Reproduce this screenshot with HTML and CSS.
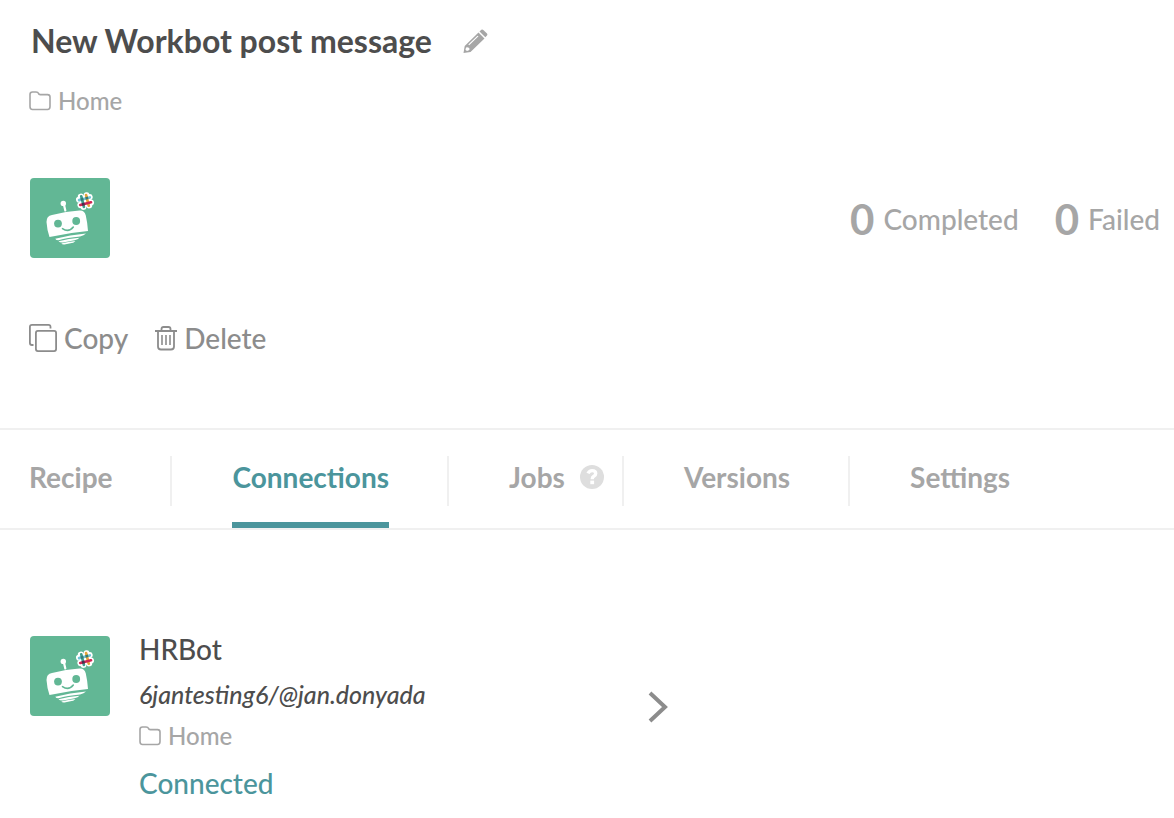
FILE: index.html
```
<!DOCTYPE html>
<html lang="en">
<head>
<meta charset="utf-8">
<title>New Workbot post message</title>
<link rel="stylesheet" href="styles.css">
</head>
<body>
<svg class="sprite" aria-hidden="true">
  <symbol id="workbot" viewBox="0 0 80 80">
    <rect width="80" height="80" rx="4" fill="#62b795"/>
    <g fill="#fff">
      <circle cx="33.300" cy="25.400" r="2.700"/>
      <path d="M33.800 26L35.300 32.500" stroke="#fff" stroke-width="2.200" stroke-linecap="round"/>
      <path d="M16.500 44Q16.300 38 22 36.900Q36 33.400 49.500 32.600Q54.500 32.300 55.800 37.500Q57.500 45 58 53Q38 54.800 19.500 59Q17 52 16.500 44Z"/>
      <path d="M25.200 60.700Q40 57 56 55.600Q54 57.800 50 58.600Q37 60 28.500 62.200Q26 62.200 25.200 60.700Z"/>
      <path d="M28.500 63.200Q39 60.400 49.500 59.700Q48 61.500 44.500 62.200L33 64.500Q29.500 64.600 28.500 63.200Z"/>
      <path d="M31.300 65.600Q38 63.600 45.500 62.900Q43.500 65 40.500 65.300L34.500 66.500Q32.200 66.700 31.300 65.600Z"/>
    </g>
    <g fill="#62b795">
      <circle cx="28" cy="45.600" r="3.900"/>
      <circle cx="46.200" cy="43" r="3.900"/>
      <path d="M32.500 50.600Q38.500 55 43.300 49" fill="none" stroke="#62b795" stroke-width="1.600" stroke-linecap="round"/>
    </g>
    <g transform="translate(55 23) rotate(-14)">
      <g fill="#fff"><circle r="6"/><circle cx="-3" cy="-5.200" r="3"/><circle cx="3" cy="-5.200" r="3"/><circle cx="5.500" cy="-2.700" r="3"/><circle cx="5.500" cy="2.900" r="3"/><circle cx="3" cy="5.300" r="3"/><circle cx="-3" cy="5.300" r="3"/><circle cx="-5.500" cy="2.900" r="3"/><circle cx="-5.500" cy="-2.700" r="3"/></g>
      <g stroke-width="2.700" stroke-linecap="round">
        <path d="M-5.500 -2.300H5.500" stroke="#6fc5d8"/>
        <path d="M2.500 -5.500V5.500" stroke="#e5a539"/>
        <path d="M-2.500 -5.500V5.500" stroke="#3d9e8c"/>
        <path d="M-5.500 2.700H5.500" stroke="#cf2453"/>
      </g>
      <path d="M-3.800 1.400h2.700V4h-2.700z" fill="#472d4d"/>
      <path d="M-3.800 -3.600h2.700v2.600h-2.700zM1.100 -3.600h2.700v2.600h-2.700z" fill="#357b78"/>
    </g>
  </symbol>
  <symbol id="folder" viewBox="0 0 22 20">
    <path d="M1 3.500Q1 1 3.500 1H7Q9 1 9.400 2.300T11.200 3.600H18.500Q21 3.600 21 6V15.500Q21 18.500 18.500 18.500H3.500Q1 18.500 1 15.500Z" fill="none" stroke="currentColor" stroke-width="1.600"/>
  </symbol>
</svg>

<main>
  <header class="recipe">
    <div class="title-row">
      <h1 class="title">New Workbot post message</h1>
      <button class="icon-button" type="button" aria-label="Edit name">
        <svg class="pencil" viewBox="0 0 25 24" fill="#a6a6a6"><path fill-rule="evenodd" d="M15.500 3.500L21.500 9.500L7.500 23L0.500 24L1.700 17ZM4 17.700L2.700 19.500L2.500 21L4 22L5.500 21.500L6.700 20.300L6 18.700L4.500 18.500ZM14.500 6.700L5.300 15.500L6.200 16.300L15.500 7.300Z"/><path d="M16.500 2.500L18.300 .8Q19.300 0 20.300 .9L24 4.600Q24.900 5.600 24 6.500L22.300 8.300Z"/></svg>
      </button>
    </div>
    <a class="folder-link" href="#home"><svg class="folder-icon"><use href="#folder"/></svg>Home</a>
    <div class="summary">
      <svg class="app-icon" role="img" aria-label="Workbot"><use href="#workbot"/></svg>
      <dl class="stats">
        <div class="stat"><dd class="count">0</dd><dt>Completed</dt></div>
        <div class="stat"><dd class="count">0</dd><dt>Failed</dt></div>
      </dl>
    </div>
    <div class="actions">
      <button class="action" type="button"><svg class="copy-icon" viewBox="0 0 28 28" fill="none" stroke="currentColor" stroke-width="1.800"><rect x="6.900" y="6.900" width="20.200" height="20.200" rx="2"/><path d="M21.500 4.500V3Q21.500 .9 19.500 .9H3Q.9 .9 .9 3V19Q.9 21 3 21H4.500"/></svg>Copy</button>
      <button class="action" type="button"><svg class="trash-icon" viewBox="0 0 22 26" fill="none" stroke="currentColor" stroke-width="1.800"><path d="M0 6H22M3 6V21.500Q3 24.500 6 24.500H16Q19 24.500 19 21.500V6M6.500 6V4Q6.500 2 8.500 2H13.500Q15.500 2 15.500 4V6"/><path d="M7 10V20M11 10V20M15 10V20" stroke-width="1.600"/></svg>Delete</button>
    </div>
  </header>

  <nav class="tabs" aria-label="Recipe sections">
    <a class="tab" href="#recipe">Recipe</a>
    <a class="tab active" href="#connections" aria-current="page"><span class="tab-label">Connections</span></a>
    <div class="tab with-help"><a class="tab-link" href="#jobs">Jobs</a><button class="icon-button" type="button" aria-label="Help about jobs"><svg class="help-icon" viewBox="0 0 24 24"><circle cx="12" cy="12" r="12" fill="#dedede"/><path d="M8 8.400Q9.300 5.600 12.100 5.600Q15.700 5.600 15.700 8.500Q15.700 10.300 13.800 11.300Q12.200 12.200 12.200 14.200" fill="none" stroke="#fff" stroke-width="3.400"/><path d="M10.300 15.600h3.800v3.600h-3.800z" fill="#fff"/></svg></button></div>
    <a class="tab" href="#versions">Versions</a>
    <a class="tab" href="#settings">Settings</a>
  </nav>

  <section class="connection" aria-label="Connection">
    <svg class="app-icon" role="img" aria-label="Workbot"><use href="#workbot"/></svg>
    <div class="details">
      <h2 class="name">HRBot</h2>
      <p class="account">6jantesting6/@jan.donyada</p>
      <a class="folder-link" href="#home"><svg class="folder-icon"><use href="#folder"/></svg>Home</a>
      <p class="status">Connected</p>
    </div>
    <button class="icon-button open" type="button" aria-label="Open connection"><svg class="chevron" viewBox="0 0 20 32"><path d="M2 2L17 16L2 30" fill="none" stroke="#8c8c8c" stroke-width="4"/></svg></button>
  </section>
</main>
</body>
</html>
```

FILE: styles.css
```
* {
  box-sizing: border-box;
}

body {
  margin: 0;
  background: #fff;
  color: #4d4d4d;
  font: 500 28px/36px Lato, sans-serif;
}

h1, h2, p, dl, dd {
  margin: 0;
}

a {
  color: inherit;
  text-decoration: none;
}

button {
  padding: 0;
  border: 0;
  background: none;
  color: inherit;
  font: inherit;
  cursor: pointer;
}

svg {
  display: block;
  flex: none;
}

.sprite {
  position: absolute;
  width: 0;
  height: 0;
}

.recipe {
  display: flex;
  flex-direction: column;
  align-items: flex-start;
  padding: 20px 14px 72px 29px;
}

.title-row {
  display: flex;
  align-items: center;
  gap: 31px;
  padding-left: 2px;
}

.title {
  font-size: 32px;
  line-height: 42px;
  font-weight: 700;
}

.pencil {
  width: 25px;
  height: 24px;
}

.folder-link {
  display: flex;
  align-items: center;
  gap: 7px;
  color: #a6a6a6;
  font-size: 24px;
  line-height: 32px;
}

.recipe .folder-link {
  margin-top: 23px;
}

.folder-icon {
  width: 22px;
  height: 20px;
}

.summary {
  display: flex;
  align-items: center;
  justify-content: space-between;
  width: 100%;
  margin-top: 61px;
}

.app-icon {
  width: 80px;
  height: 80px;
}

.summary .app-icon {
  margin-left: 1px;
}

.stats {
  display: flex;
  gap: 36px;
  color: #a6a6a6;
}

.stat {
  display: flex;
  align-items: center;
  gap: 9px;
  padding-top: 2px;
}

.count {
  font-size: 42px;
  font-weight: 700;
}

.actions {
  display: flex;
  gap: 27px;
  margin-top: 62px;
  color: #8c8c8c;
}

.action {
  display: flex;
  align-items: center;
  gap: 7px;
}

.copy-icon {
  width: 28px;
  height: 28px;
}

.trash-icon {
  width: 22px;
  height: 26px;
}

.tabs {
  display: flex;
  align-items: stretch;
  padding-left: 29px;
  border-top: 2px solid #f0f0f0;
  border-bottom: 2px solid #f0f0f0;
  color: #a6a6a6;
  font-weight: 700;
}

.tab {
  display: flex;
  align-items: stretch;
  padding: 29px 60px 33px;
  background: linear-gradient(#f0f0f0, #f0f0f0) no-repeat right 26px / 2px 50px;
}

.tab:first-child {
  padding-left: 0;
}

.tab:last-child {
  background: none;
}

.tab.active {
  padding-bottom: 0;
  color: #4b959c;
}

.tab-label {
  border-bottom: 6px solid #4b959c;
}

.tab.with-help {
  align-items: center;
  gap: 15px;
  padding-right: 20px;
}

.help-icon {
  width: 24px;
  height: 24px;
}

.connection {
  display: flex;
  gap: 29px;
  padding: 101px 30px 16px;
}

.connection > .app-icon {
  margin-top: 5px;
}

.open {
  align-self: flex-start;
  margin-top: 60px;
}

.details {
  flex: 0 1 480px;
}

.name {
  font-size: 28px;
  font-weight: 500;
}

.account {
  margin-top: 9px;
  font-size: 25px;
  font-style: italic;
}

.details .folder-link {
  margin-top: 8px;
}

.status {
  margin-top: 13px;
}

.status {
  color: #4b959c;
}

.chevron {
  width: 20px;
  height: 32px;
}
```
